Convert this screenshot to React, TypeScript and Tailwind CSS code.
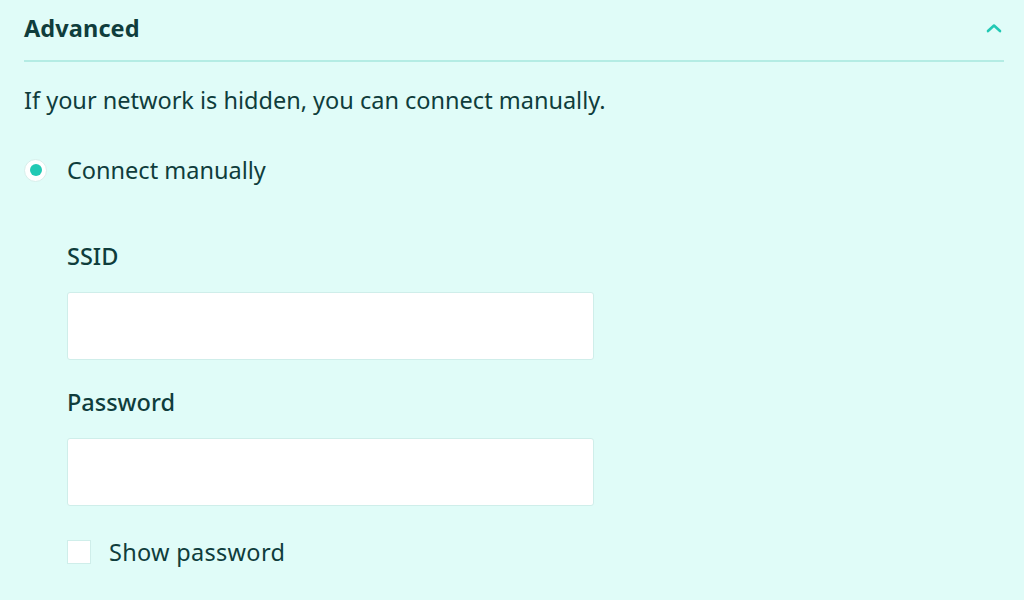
const FONT = { fontFamily: '"Noto Sans", "Open Sans", sans-serif' }

export default function App() {
  return (
    <div className="w-[1024px] h-[600px] overflow-hidden bg-[#e0fcf8] text-[#0f3d3c]" style={FONT}>
      <div className="pl-6 pr-5">
        <div className="flex items-center justify-between h-[62px] pb-1 border-b-2 border-[#b4ece4]">
          <h2 className="text-[23.5px] leading-[30px] font-bold tracking-[0.1px]">Advanced</h2>
          <svg width="16" height="10" viewBox="0 0 16 10" className="mr-[2px]" fill="none">
            <path d="M2 8 L8 2.5 L14 8" stroke="#22c9b4" strokeWidth="2.6" strokeLinecap="round" strokeLinejoin="round" />
          </svg>
        </div>

        <p className="mt-[23px] text-[23.5px] leading-[30px]">If your network is hidden, you can connect manually.</p>

        <label className="flex items-center mt-[40px] h-[30px]">
          <span className="w-[23px] h-[23px] rounded-full bg-white border border-[#d6efeb] flex items-center justify-center">
            <span className="w-[12px] h-[12px] rounded-full bg-[#22c9b4]" />
          </span>
          <span className="ml-[20px] text-[23.5px] leading-[30px]">Connect manually</span>
        </label>

        <div className="ml-[43px] w-[527px]">
          <div className="mt-[56px] text-[23.5px] font-medium leading-[30px]">SSID</div>
          <input className="mt-[21px] block w-full h-[68px] bg-white border border-[#cfeeea] rounded-[3px] outline-none" />

          <div className="mt-[27px] text-[23.5px] font-medium leading-[30px]">Password</div>
          <input type="password" className="mt-[21px] block w-full h-[68px] bg-white border border-[#cfeeea] rounded-[3px] outline-none" />

          <label className="flex items-center mt-[31px] h-[30px]">
            <span className="w-[24px] h-[24px] bg-white border border-[#cfeeea]" />
            <span className="ml-[18px] text-[23.5px] leading-[30px] tracking-[0.3px]">Show password</span>
          </label>
        </div>
      </div>
    </div>
  )
}
